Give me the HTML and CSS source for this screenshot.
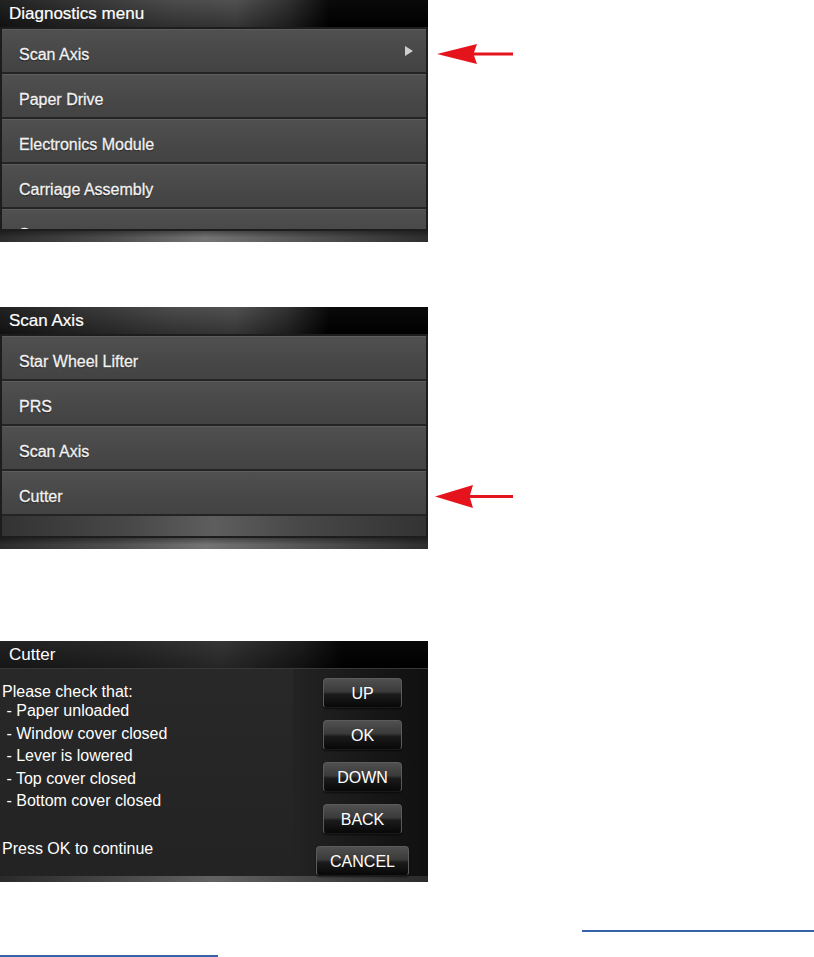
FILE: index.html
```html
<!DOCTYPE html>
<html lang="en">
    <head>
        <meta charset="utf-8">
        <meta name="viewport" content="width=device-width, initial-scale=1">
        <title>Cutter diagnostics</title>
        <link rel="stylesheet" href="styles.css">
    </head>

    <body>
        <main class="manual">
            <!-- step 1: diagnostics menu -->
            <section class="step">
                <div class="screen">
                    <div class="screen-title">Diagnostics menu</div>
                    <ul class="menu">
                        <li class="menu-item">
                            <span class="menu-label">Scan Axis</span>
                            <svg class="chevron" width="8" height="10" viewBox="0 0 8 10"><polygon points="0,0 8,5 0,10" fill="#cfcfcf"/></svg>
                        </li>
                        <li class="menu-item"><span class="menu-label">Paper Drive</span></li>
                        <li class="menu-item"><span class="menu-label">Electronics Module</span></li>
                        <li class="menu-item"><span class="menu-label">Carriage Assembly</span></li>
                        <li class="menu-item"><span class="menu-label">Sensors</span></li>
                    </ul>
                    <div class="screen-footer"></div>
                </div>
                <svg class="pointer pointer-first" width="76" height="20" viewBox="0 0 76 20"><polygon points="0,10 40,0 37,8.5 76,8.5 76,11.5 37,11.5 40,20" fill="#e5141c"/></svg>
            </section>

            <!-- step 2: scan axis submenu -->
            <section class="step step-second">
                <div class="screen">
                    <div class="screen-title">Scan Axis</div>
                    <ul class="menu">
                        <li class="menu-item"><span class="menu-label">Star Wheel Lifter</span></li>
                        <li class="menu-item"><span class="menu-label">PRS</span></li>
                        <li class="menu-item"><span class="menu-label">Scan Axis</span></li>
                        <li class="menu-item"><span class="menu-label">Cutter</span></li>
                    </ul>
                    <div class="screen-footer"></div>
                </div>
                <svg class="pointer pointer-last" width="78" height="23" viewBox="0 0 78 23"><polygon points="0,11.5 38,0 35,10 78,10 78,13 35,13 38,23" fill="#e5141c"/></svg>
            </section>

            <!-- step 3: cutter check dialog -->
            <section class="step step-third">
                <div class="screen">
                    <div class="screen-title screen-title-dialog">Cutter</div>
                    <div class="check">
                        <div class="check-text">
                            <p class="check-lead">Please check that:</p>
                            <ul class="check-list">
                                <li> - Paper unloaded</li>
                                <li> - Window cover closed</li>
                                <li> - Lever is lowered</li>
                                <li> - Top cover closed</li>
                                <li> - Bottom cover closed</li>
                            </ul>
                            <p class="check-foot">Press OK to continue</p>
                        </div>
                        <div class="check-buttons">
                            <button class="check-btn">UP</button>
                            <button class="check-btn">OK</button>
                            <button class="check-btn">DOWN</button>
                            <button class="check-btn">BACK</button>
                            <button class="check-btn check-btn-wide">CANCEL</button>
                        </div>
                    </div>
                    <div class="screen-strip"></div>
                </div>
            </section>

            <div class="refs">
                <a class="ref-link ref-link-first" href="#"></a>
                <a class="ref-link ref-link-second" href="#"></a>
            </div>
        </main>
    </body>
</html>
```

FILE: styles.css
```css
/* page */
* {
    box-sizing: border-box;
}

body {
    margin: 0;
    background: #fff;
    color: #fff;
    font-family: "Liberation Sans", Arial, sans-serif;
}

.step {
    display: flex;
    align-items: flex-start;
}

.step-second {
    margin-top: 65px;
}

.step-third {
    margin-top: 92px;
}

/* printer screen */
.screen {
    flex: none;
    width: 428px;
    background: #1c1c1c;
}

.screen-title {
    height: 27px;
    padding: 1px 9px 0;
    font-size: 17px;
    line-height: 26px;
    white-space: nowrap;
    -webkit-text-stroke: 0.2px #fff;
    background:
        linear-gradient(rgba(255, 255, 255, 0.04), rgba(0, 0, 0, 0.3)),
        linear-gradient(90deg, #191919 0%, #2a2a2a 15%, #444 40%, #4a4a4a 55%, #2a2a2a 67%, #000 77%, #000 100%);
}

.screen-title-dialog {
    height: 28px;
    border-bottom: 1px solid #383838;
    -webkit-text-stroke: 0;
    background:
        linear-gradient(rgba(255, 255, 255, 0.03), rgba(0, 0, 0, 0.2)),
        linear-gradient(90deg, #1b1b1b 0%, #222 30%, #2f2f2f 52%, #161616 70%, #000 80%, #000 100%);
}

.screen-footer {
    height: 11px;
    background:
        linear-gradient(rgba(0, 0, 0, 0.35), rgba(0, 0, 0, 0) 60%),
        linear-gradient(90deg, #2c2c2c, #505050 28%, #747474 48%, #555 70%, #2e2e2e);
}

/* menu list */
.menu {
    list-style: none;
    margin: 0;
    padding: 0;
    height: 204px;
    overflow: hidden;
    border: 2px solid #1d1d1d;
    background:
        linear-gradient(rgba(0, 0, 0, 0.35), rgba(0, 0, 0, 0) 50%),
        linear-gradient(90deg, #333 0%, #484848 30%, #5e5e5e 50%, #484848 70%, #333 100%);
}

.menu-item {
    display: flex;
    align-items: center;
    height: 45px;
    padding: 0 13px 0 17px;
    border-top: 1px solid #5d5d5d;
    border-bottom: 2px solid #242424;
    background: linear-gradient(#505050, #474747 60%, #434343);
    font-size: 16px;
    text-shadow: 0 1px 1px rgba(0, 0, 0, 0.7);
}

.menu-label {
    padding-top: 8px;
    color: #f2f2f2;
    -webkit-text-stroke: 0.3px #f2f2f2;
}

.chevron {
    margin-left: auto;
}

.pointer {
    flex: none;
    margin-left: 9px;
}

.pointer-first {
    margin-top: 44px;
}

.pointer-last {
    margin-top: 178px;
    margin-left: 7px;
}

/* cutter dialog */
.check {
    display: flex;
    height: 207px;
}

.check-text {
    width: 293px;
    padding: 12px 0 0 2px;
    background: linear-gradient(#282828, #232323);
    font-size: 16px;
    line-height: 22.5px;
}

.check-lead {
    margin: 0 0 -3.5px;
}

.check-list {
    list-style: none;
    margin: 0;
    padding: 0;
}

.check-list li {
    white-space: pre;
}

.check-foot {
    margin: 25.5px 0 0;
}

.check-buttons {
    flex: 1;
    display: flex;
    flex-direction: column;
    align-items: center;
    gap: 12px;
    padding: 9px 0 0 4px;
    background: linear-gradient(90deg, #232323, #171717 60%, #101010);
}

.check-btn {
    width: 79px;
    height: 30px;
    padding: 2px 0 0;
    border: 1px solid #5c5c5c;
    border-bottom-color: #1a1a1a;
    border-radius: 4px;
    background: linear-gradient(#505050, #3a3a3a 45%, #1b1b1b 55%, #080808);
    box-shadow: 0 1px 2px rgba(0, 0, 0, 0.6);
    color: #fff;
    font-family: "Liberation Sans", Arial, sans-serif;
    font-size: 16px;
}

.check-btn-wide {
    width: 93px;
}

.screen-strip {
    height: 6px;
    background: linear-gradient(90deg, #2a2a2a, #4a4a4a 30%, #626262 50%, #4a4a4a 70%, #2a2a2a);
}

/* reference links */
.refs {
    padding-top: 48px;
}

.ref-link {
    display: block;
    border-bottom: 2px solid #3662a9;
}

.ref-link-first {
    width: 232px;
    margin-left: 582px;
}

.ref-link-second {
    width: 218px;
    margin-top: 23px;
}
```
